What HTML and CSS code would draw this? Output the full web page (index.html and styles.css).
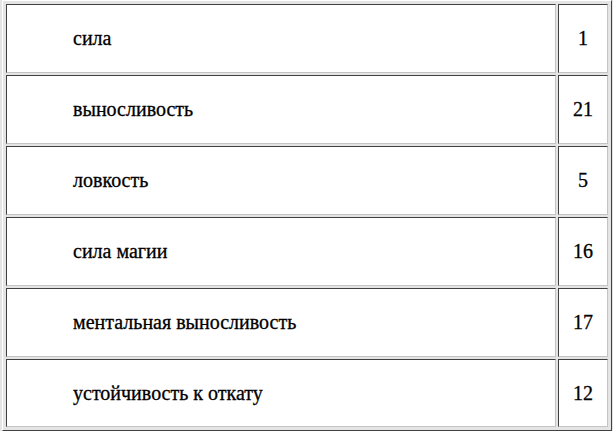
FILE: index.html
```html
<!DOCTYPE html>
<html lang="ru">
<head>
<meta charset="utf-8">
<title>Характеристики</title>
<link rel="stylesheet" href="styles.css">
</head>
<body>
<table class="stats">
  <tbody>
    <tr><td class="name">сила</td><td class="val">1</td></tr>
    <tr><td class="name">выносливость</td><td class="val">21</td></tr>
    <tr><td class="name">ловкость</td><td class="val">5</td></tr>
    <tr><td class="name">сила магии</td><td class="val">16</td></tr>
    <tr><td class="name">ментальная выносливость</td><td class="val">17</td></tr>
    <tr class="last"><td class="name">устойчивость к откату</td><td class="val">12</td></tr>
  </tbody>
</table>
</body>
</html>
```

FILE: styles.css
```css
html, body {
  margin: 0;
  padding: 0;
  background: #e4e4e4;
}

body {
  padding-left: 2px;
}

.stats {
  border-collapse: separate;
  border-spacing: 2px;
  padding: 1px;
  width: 610px;
  border: 1px solid;
  border-color: #ffffff #404040 #404040 #ffffff;
  background: #e4e4e4;
}

.stats td {
  height: 67px;
  padding: 0;
  background: #ffffff;
  border: 1px solid;
  border-color: #404040 #c4c4c4 #c4c4c4 #404040;
  vertical-align: middle;
  font-family: "Liberation Serif", "DejaVu Serif", serif;
  font-size: 20px;
  color: #000;
  -webkit-text-stroke: 0.3px #000;
}

.stats .last td {
  height: 66px;
}

.stats .name {
  padding-left: 66px;
  text-align: left;
}

.stats .val {
  width: 48px;
  text-align: center;
}
```
